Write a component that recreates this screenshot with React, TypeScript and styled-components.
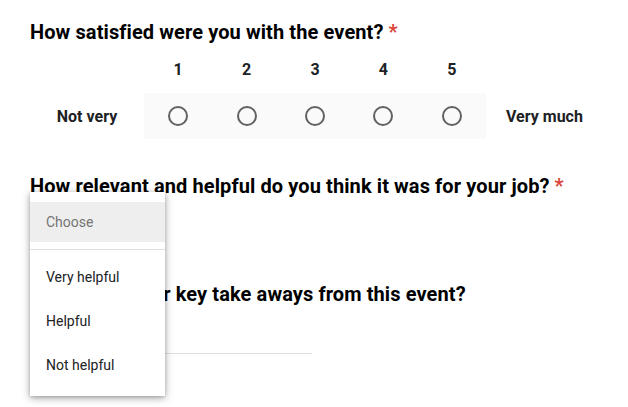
import React from "react";
import styled, { createGlobalStyle } from "styled-components";

const Global = createGlobalStyle`
  html, body { margin: 0; padding: 0; background: #fff; }
  body { font-family: Roboto, "Liberation Sans", sans-serif; color: #202124; }
  * { box-sizing: border-box; }
`;

const Page = styled.div`
  position: relative;
  width: 628px;
  height: 407px;
  overflow: hidden;
  padding: 20px 0 0 30px;
`;

const Question = styled.section<{ $gap?: number }>`
  display: flex;
  flex-direction: column;
  margin-bottom: ${(p) => p.$gap ?? 0}px;
`;

const Title = styled.h2`
  margin: 0;
  font-size: 20px;
  line-height: 24px;
  font-weight: 700;
  color: #000;
  letter-spacing: 0.1px;
  white-space: nowrap;
`;

const Star = styled.span`
  color: #db4437;
  margin-left: 5px;
`;

const Scale = styled.div`
  display: grid;
  grid-template-columns: 114px repeat(5, 68.4px) 117px;
  grid-template-rows: 45px 46px;
  margin-top: 4px;
`;

const ColNum = styled.div`
  display: flex;
  align-items: center;
  justify-content: center;
  padding-bottom: 3px;
  font-size: 16px;
  font-weight: 700;
  color: #202124;
`;

const Side = styled.div`
  display: flex;
  align-items: center;
  justify-content: center;
  font-size: 16px;
  font-weight: 700;
  color: #202124;
`;

const Cell = styled.div`
  display: flex;
  align-items: center;
  justify-content: center;
  background: #fafafa;
`;

const Radio = styled.span`
  width: 20px;
  height: 20px;
  border-radius: 50%;
  border: 2px solid #616161;
`;

const Field = styled.div`
  height: 84px;
`;

const Underline = styled.div`
  margin-top: 47px;
  width: 282px;
  height: 1px;
  background: #e0e0e0;
`;

const Menu = styled.ul`
  position: absolute;
  left: 30px;
  top: 192px;
  width: 135px;
  margin: 0;
  padding: 10px 0 9px;
  list-style: none;
  background: #fff;
  box-shadow: 0 2px 8px rgba(0, 0, 0, 0.35), 0 1px 3px rgba(0, 0, 0, 0.15);
  z-index: 2;
`;

const Item = styled.li<{ $placeholder?: boolean }>`
  height: ${(p) => (p.$placeholder ? 40 : 44)}px;
  display: flex;
  align-items: center;
  padding-left: 16px;
  font-size: 14px;
  color: ${(p) => (p.$placeholder ? "#757575" : "#202124")};
  background: ${(p) => (p.$placeholder ? "#eeeeee" : "transparent")};
`;

const Divider = styled.li`
  height: 1px;
  background: #e0e0e0;
  margin: 7px 0 5px;
`;

export default function App() {
  const nums = [1, 2, 3, 4, 5];
  return (
    <>
      <Global />
      <Page>
        <Question $gap={35}>
          <Title>
            How satisfied were you with the event?<Star>*</Star>
          </Title>
          <Scale>
            <div />
            {nums.map((n) => (
              <ColNum key={n}>{n}</ColNum>
            ))}
            <div />
            <Side>Not very</Side>
            {nums.map((n) => (
              <Cell key={n}>
                <Radio />
              </Cell>
            ))}
            <Side>Very much</Side>
          </Scale>
        </Question>
        <Question>
          <Title>
            How relevant and helpful do you think it was for your job?<Star>*</Star>
          </Title>
          <Field />
        </Question>
        <Question>
          <Title>What were your key take aways from this event?</Title>
          <Underline />
        </Question>
        <Menu>
          <Item $placeholder>Choose</Item>
          <Divider />
          <Item>Very helpful</Item>
          <Item>Helpful</Item>
          <Item>Not helpful</Item>
        </Menu>
      </Page>
    </>
  );
}
